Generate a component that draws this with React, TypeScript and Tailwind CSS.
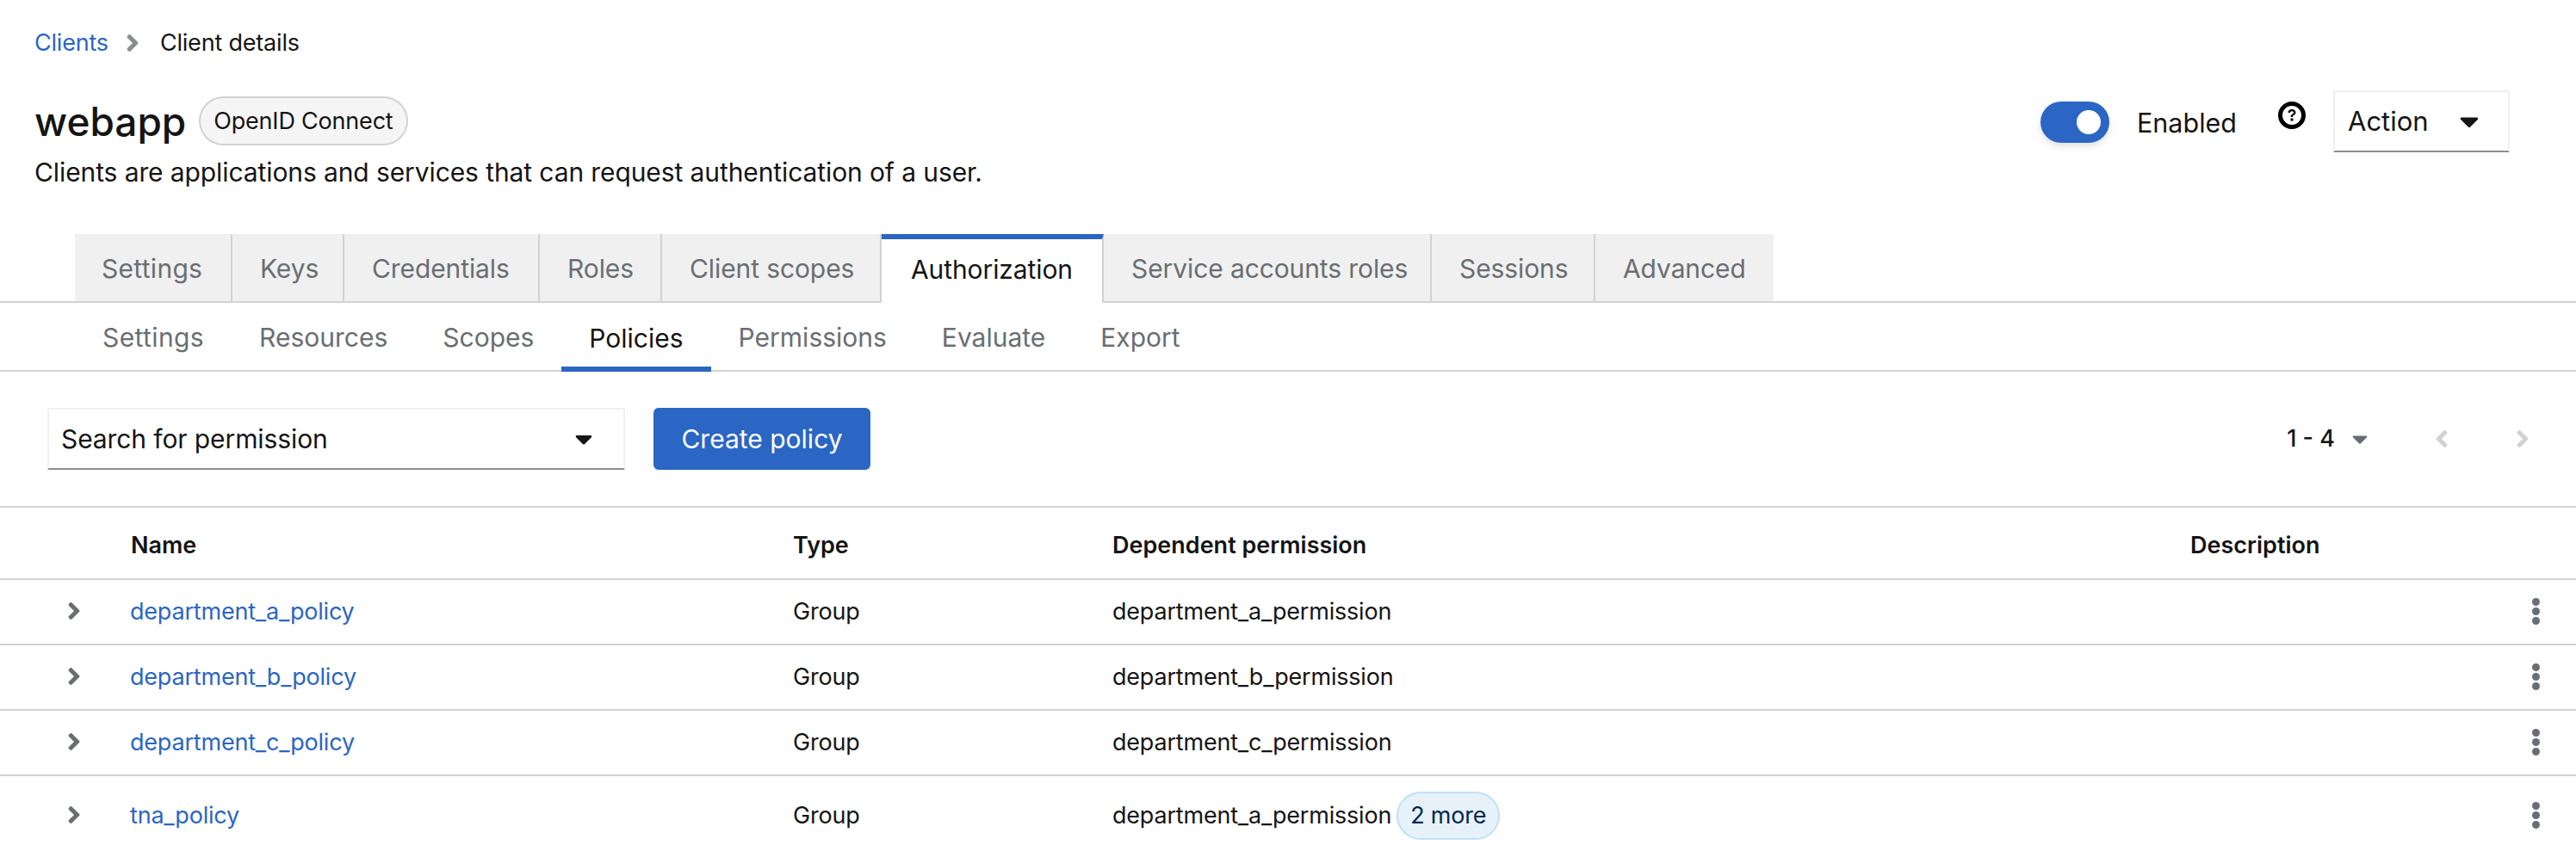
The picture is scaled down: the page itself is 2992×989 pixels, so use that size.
import React from "react";

const FONT = "font-['Inter','Liberation_Sans',sans-serif]";

function Chevron({ className = "" }: { className?: string }) {
  return (
    <svg viewBox="0 0 256 512" className={className} fill="currentColor">
      <path d="M224.3 273l-136 136c-9.4 9.4-24.6 9.4-33.9 0l-22.6-22.6c-9.4-9.4-9.4-24.6 0-33.9l96.4-96.4-96.4-96.4c-9.4-9.4-9.4-24.6 0-33.9L54.3 103c9.4-9.4 24.6-9.4 33.9 0l136 136c9.5 9.4 9.5 24.6.1 34z" />
    </svg>
  );
}

function Caret({ className = "" }: { className?: string }) {
  return (
    <svg viewBox="0 0 320 512" className={className} fill="currentColor">
      <path d="M31.3 192h257.3c17.8 0 26.7 21.5 14.1 34.1L174.1 354.8c-7.8 7.8-20.5 7.8-28.3 0L17.2 226.1C4.6 213.5 13.5 192 31.3 192z" />
    </svg>
  );
}

function Kebab() {
  return (
    <span className="flex flex-col gap-[2px] w-[9px] items-center mb-[2px]">
      <span className="w-[9px] h-[9px] rounded-full bg-[#6a6e73]" />
      <span className="w-[9px] h-[9px] rounded-full bg-[#6a6e73]" />
      <span className="w-[9px] h-[9px] rounded-full bg-[#6a6e73]" />
    </span>
  );
}

const mainTabs = [
  ["Settings", 183], ["Keys", 130], ["Credentials", 227], ["Roles", 142], ["Client scopes", 255],
  ["Authorization", 258], ["Service accounts roles", 381], ["Sessions", 190], ["Advanced", 207],
] as const;

const subTabs = ["Settings", "Resources", "Scopes", "Policies", "Permissions", "Evaluate", "Export"];

const rows = [
  { name: "department_a_policy", dep: "department_a_permission", more: "", h: "h-[76px]" },
  { name: "department_b_policy", dep: "department_b_permission", more: "", h: "h-[76px]" },
  { name: "department_c_policy", dep: "department_c_permission", more: "", h: "h-[76px]" },
  { name: "tna_policy", dep: "department_a_permission", more: "2 more", h: "h-[92px]" },
];

export default function App() {
  return (
    <div className={`${FONT} w-[2992px] h-[989px] overflow-hidden bg-white text-[#151515] text-[27px] tracking-[-0.2px]`}>
      <nav className="flex items-center h-[28px] mt-[36px] pl-[40px]">
        <span className="text-[#2b66c4]">Clients</span>
        <Chevron className="w-[16px] h-[32px] ml-[20px] mr-[24px] text-[#8a8d90]" />
        <span>Client details</span>
      </nav>

      <div className="flex justify-between pl-[40px] pr-[77px] mt-[48px]">
        <div>
          <div className="flex items-center h-[57px]">
            <h1 className="text-[46px] font-medium leading-none tracking-normal">webapp</h1>
            <span className="ml-[15px] h-[57px] pt-[2px] px-[15px] flex items-center rounded-full border-2 border-[#d2d2d2] bg-[#f5f5f5] text-[27px]">OpenID Connect</span>
          </div>
          <p className="mt-[13px] text-[30px] leading-[36px] tracking-[-0.1px]">Clients are applications and services that can request authentication of a user.</p>
        </div>
        <div className="flex items-start -mt-[7px]">
          <span className="relative mt-[13px] w-[80px] h-[48px] rounded-full bg-[#2b66c4] shadow-[0_4px_8px_rgba(0,0,0,0.12)]">
            <span className="absolute right-[10px] top-[10px] w-[28px] h-[28px] rounded-full bg-white" />
          </span>
          <span className="ml-[32px] mt-[20px] text-[30.5px] leading-[36px] tracking-normal">Enabled</span>
          <svg viewBox="0 0 32 32" className="ml-[48px] mt-[13px] w-[32px] h-[32px]">
            <circle cx="16" cy="16" r="13.5" fill="none" stroke="#000" strokeWidth="5" />
            <path d="M11.5 13c0-2.6 2-4 4.500-4s4.500 1.400 4.500 3.700c0 3-3.600 3-3.600 5.300h-2.300c0-3.500 3.500-3.600 3.500-5.200 0-1-.8-1.600-2-1.600s-2.100.7-2.100 1.800z" fill="#000" />
            <rect x="14.500" y="19.500" width="3" height="3" fill="#000" />
          </svg>
          <div className="ml-[32px] w-[205px] h-[72px] border-2 border-[#f0f0f0] border-b-[#8a8d90] flex items-center pl-[15px]">
            <span className="text-[31px] tracking-normal">Action</span>
            <Caret className="ml-[36px] w-[22px] h-[36px]" />
          </div>
        </div>
      </div>

      <div className="mt-[54px] flex pl-[87px] h-[80px] border-b-2 border-[#d2d2d2]">
        {mainTabs.map(([label, w]) => {
          const active = label === "Authorization";
          return (
            <div
              key={label}
              style={{ width: w }}
              className={
                active
                  ? "h-[80px] pb-[4px] pl-[34px] border-t-[6px] border-[#2b66c4] bg-white flex items-center text-[30px] tracking-[-0.1px] text-[#151515] border-r-2 border-r-[#d2d2d2]"
                  : "h-[78px] pt-[3px] pl-[32px] first:pl-[31px] bg-[#f0f0f0] border-r-2 border-[#d2d2d2] last:border-r-0 first:tracking-[0.3px] flex items-center text-[30px] tracking-[-0.1px] text-[#6a6e73]"
              }
            >
              {label}
            </div>
          );
        })}
      </div>

      <div className="flex pl-[87px] h-[80px] border-b-2 border-[#d2d2d2]">
        {subTabs.map((label) => {
          const active = label === "Policies";
          return (
            <div
              key={label}
              className={
                active
                  ? "h-[80px] px-[32px] pt-[8px] flex items-center text-[30px] tracking-normal text-[#151515] border-b-[6px] border-[#2b66c4]"
                  : "h-[78px] px-[32px] pt-[3px] flex items-center text-[30px] tracking-normal first:tracking-[0.4px] text-[#6a6e73]"
              }
            >
              {label}
            </div>
          );
        })}
      </div>

      <div className="flex items-center h-[72px] mt-[42px] pl-[55px] pr-[54px]">
        <div className="w-[671px] h-[72px] border-2 border-[#f0f0f0] border-b-[#8a8d90] flex items-center justify-between pl-[14px] pr-[36px]">
          <span className="text-[30px] tracking-[-0.1px]">Search for permission</span>
          <Caret className="w-[20px] h-[36px]" />
        </div>
        <button className="ml-[33px] w-[252px] h-[72px] rounded-[6px] bg-[#2b66c4] text-white text-[30px] tracking-normal">Create policy</button>
        <div className="ml-auto flex items-center">
          <span className="font-medium text-[27px] tracking-normal">1 - 4</span>
          <Caret className="ml-[20px] w-[18px] h-[30px] text-[#6a6e73]" />
          <Chevron className="ml-[78px] w-[16px] h-[32px] text-[#d2d2d2] rotate-180" />
          <Chevron className="ml-[78px] w-[16px] h-[32px] text-[#d2d2d2]" />
        </div>
      </div>

      <div className="mt-[42px] border-t-2 border-[#d2d2d2]">
        <div className="grid grid-cols-[152px_769px_371px_1252px_1fr] items-center h-[84px] pt-[6px] border-b-2 border-[#d2d2d2] font-semibold text-[27px] tracking-normal">
          <span />
          <span>Name</span>
          <span>Type</span>
          <span>Dependent permission</span>
          <span>Description</span>
        </div>
        {rows.map((r, i) => (
          <div key={r.name} className={`grid grid-cols-[152px_769px_371px_1252px_1fr] items-center ${r.h} ${i < rows.length - 1 ? "border-b-2 border-[#d2d2d2]" : ""}`}>
            <span className="pl-[78px] pb-[2px] flex"><Chevron className="w-[16px] h-[32px] text-[#6a6e73]" /></span>
            <span className="text-[#2b66c4] -ml-[1px]">{r.name}</span>
            <span>Group</span>
            <span className="flex items-center">
              {r.dep}
              {r.more && (
                <span className="ml-[6px] h-[56px] px-[14px] flex items-center rounded-full border-2 border-[#bee1f4] bg-[#e7f1fa] text-[#002952]">{r.more}</span>
              )}
            </span>
            <span className="flex justify-end pr-[42px]"><Kebab /></span>
          </div>
        ))}
      </div>
    </div>
  );
}
